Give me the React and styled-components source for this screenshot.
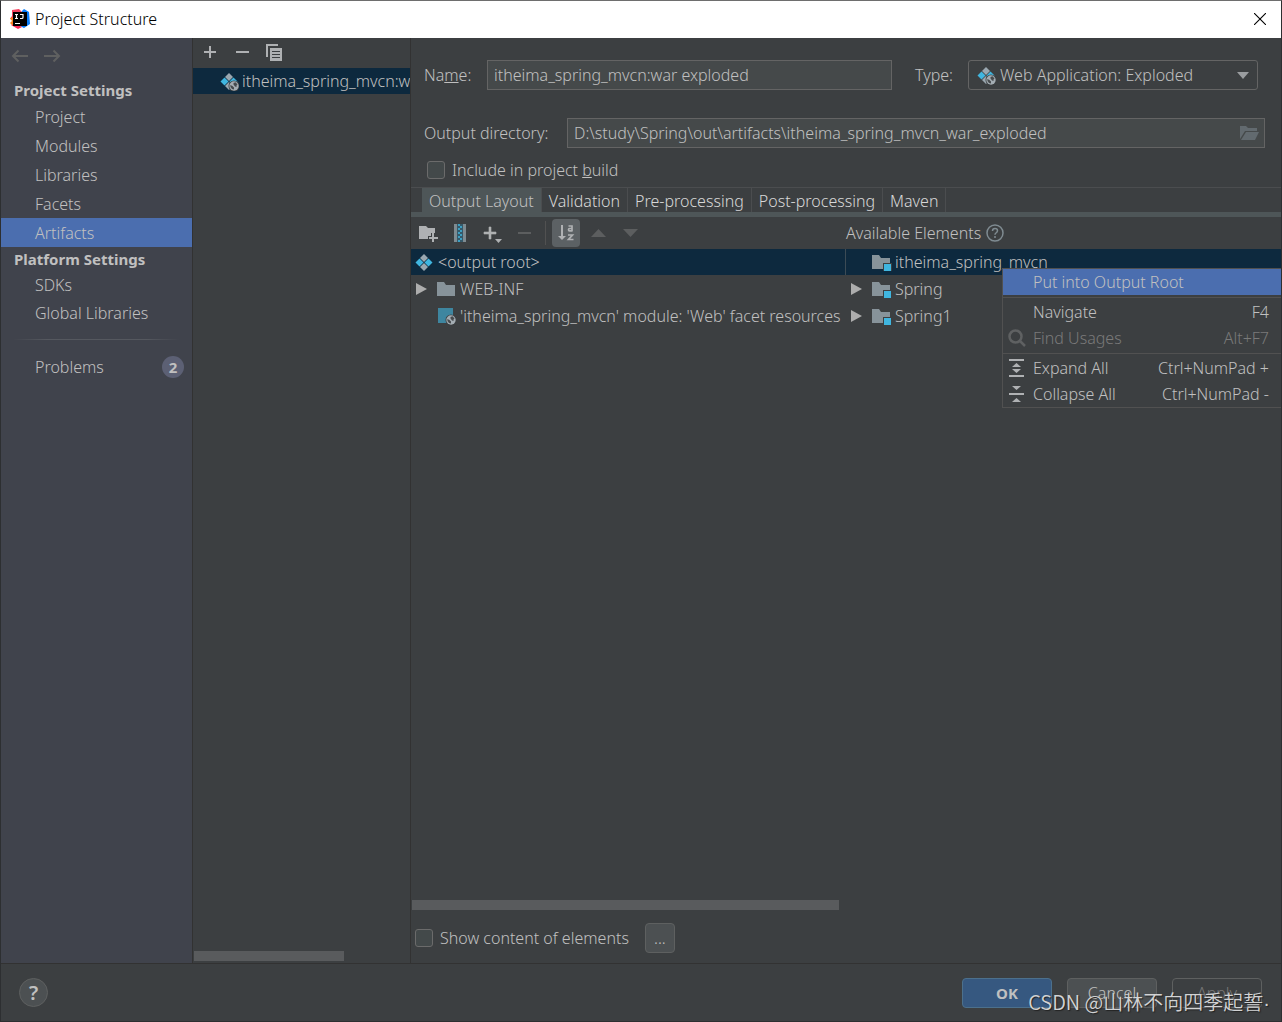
import styled, { createGlobalStyle } from "styled-components";

const COLORS = {
  background: "#3c3f41",
  sidebar: "#40434c",
  selection: "#4b6eaf",
  treeSelection: "#0d293e",
  text: "#c0c0c0",
  disabled: "#7a7a7a",
  line: "#323232",
  separator: "#515151",
  field: "#45494a",
  fieldBorder: "#646464",
  strip: "#4e5658",
  icon: "#afb1b3",
  blue: "#40b6e0",
  folder: "#87939a",
};

const GlobalStyle = createGlobalStyle`
  * {
    box-sizing: border-box;
  }

  body {
    margin: 0;
    background: ${COLORS.background};
    color: ${COLORS.text};
    font-family: "Noto Sans", "Noto Sans CJK SC", sans-serif;
    font-size: 16px;
    font-weight: 330;
    line-height: 20px;
  }

  button, input, select {
    margin: 0;
    font: inherit;
    color: inherit;
  }

  ul {
    margin: 0;
    padding: 0;
    list-style: none;
  }

  svg {
    display: block;
    flex: none;
  }
`;

const Window = styled.div`
  position: relative;
  display: flex;
  flex-direction: column;
  min-height: 100vh;
  border: 1px solid #2d2f31;
  border-top-color: #6e6e6e;
  overflow: hidden;
`;

const TitleBar = styled.header`
  display: flex;
  align-items: center;
  gap: 5px;
  height: 37px;
  padding: 0 15px 2px 9px;
  background: #ffffff;
  color: #000000;

  h1 {
    flex: 1;
    margin: 0;
    font-size: 16px;
    font-weight: 330;
  }
`;

const PlainButton = styled.button`
  display: flex;
  align-items: center;
  justify-content: center;
  padding: 0;
  border: 0;
  background: none;
`;

const Body = styled.div`
  flex: 1;
  display: grid;
  grid-template-columns: 192px 218px minmax(0, 1fr);
  border-bottom: 1px solid ${COLORS.line};
`;

const Sidebar = styled.nav`
  background: ${COLORS.sidebar};
  border-right: 1px solid ${COLORS.line};
`;

const History = styled.div`
  display: flex;
  gap: 16px;
  height: 40px;
  padding: 0 10px 4px;
  align-items: center;
`;

const SidebarTitle = styled.h2`
  margin: 0;
  padding-left: 13px;
  font-size: 15px;
  line-height: 24px;
`;

const SidebarLink = styled.a`
  display: flex;
  align-items: center;
  justify-content: space-between;
  height: ${(props) => (props.$short ? 28 : 29)}px;
  padding: 0 8px 0 34px;
  color: inherit;
  text-decoration: none;
  background: ${(props) => (props.$active ? COLORS.selection : "none")};
`;

const SidebarLine = styled.hr`
  height: 1px;
  margin: 12px 12px;
  border: 0;
  background: linear-gradient(to right, transparent, #55585f 20%, #55585f 80%, transparent);
`;

const Count = styled.span`
  width: 22px;
  border-radius: 11px;
  background: #5c6074;
  font-size: 15px;
  font-weight: 700;
  line-height: 22px;
  text-align: center;
`;

const Column = styled.section`
  display: flex;
  flex-direction: column;
  min-width: 0;
  padding-bottom: 2px;
  border-right: 1px solid ${COLORS.line};
`;

const ListToolbar = styled.div`
  display: flex;
  align-items: center;
  gap: 15px;
  height: 30px;
  padding: 0 8px 2px;
`;

const Artifact = styled.div`
  flex: 1;

  a {
    display: flex;
    align-items: center;
    gap: 3px;
    height: 26px;
    padding-left: 27px;
    overflow: hidden;
    background: ${COLORS.treeSelection};
    color: inherit;
    text-decoration: none;
    white-space: nowrap;
  }
`;

const Scrollbar = styled.div`
  width: ${(props) => props.$size};
  height: 10px;
  margin: 0 1px;
  background: #595b5d;
`;

const Main = styled.main`
  display: flex;
  flex-direction: column;
  min-width: 0;
`;

const Form = styled.form`
  padding: 22px 16px 0 13px;
`;

const FormRow = styled.div`
  display: flex;
  align-items: center;
  height: 30px;
  margin-bottom: ${(props) => props.$after}px;
  padding-right: ${(props) => props.$inset || 0}px;
`;

const Label = styled.label`
  width: ${(props) => props.$width}px;
  padding-left: ${(props) => props.$indent || 0}px;
  flex: none;
`;

const Field = styled.div`
  display: flex;
  align-items: center;
  flex: 1;
  min-width: 0;
  height: 30px;
  padding-right: 5px;
  border: 1px solid ${COLORS.fieldBorder};
  background: ${COLORS.field};

  input {
    flex: 1;
    min-width: 0;
    padding: 0 6px;
    border: 0;
    outline: 0;
    background: none;
  }
`;

const SelectBox = styled.div`
  display: flex;
  align-items: center;
  gap: 4px;
  width: 290px;
  height: 30px;
  padding: 0 8px;
  border: 1px solid ${COLORS.fieldBorder};
  border-radius: 3px;

  select {
    flex: 1;
    min-width: 0;
    appearance: none;
    padding: 0;
    border: 0;
    outline: 0;
    background: none;
  }
`;

const CheckLabel = styled.label`
  display: flex;
  align-items: center;
  gap: 7px;
  padding-left: ${(props) => props.$indent}px;

  input {
    appearance: none;
    width: 18px;
    height: 18px;
    border: 1px solid #6b6b6b;
    border-radius: 3px;
    background: #43494a;
  }
`;

const Tabs = styled.div`
  display: flex;
  height: 30px;
  padding-left: 11px;
  border-top: 1px solid #4b4d4f;
  border-bottom: 5px solid ${COLORS.strip};
`;

const Tab = styled.button`
  padding: 2px 7px 0;
  border: 0;
  border-right: 1px solid #4b4d4f;
  background: ${(props) => (props.$active ? COLORS.strip : "none")};
  color: ${(props) => (props.$active ? COLORS.text : "#d8d8d8")};
  white-space: nowrap;
`;

const Panes = styled.div`
  flex: 1;
  display: grid;
  grid-template-columns: 1fr 1fr;
`;

const Pane = styled.div`
  position: relative;
  display: flex;
  flex-direction: column;
  min-width: 0;
`;

const PaneToolbar = styled.div`
  display: flex;
  align-items: center;
  gap: ${(props) => props.$gap}px;
  height: 32px;
  padding-left: ${(props) => props.$indent}px;
`;

const ToolButton = styled(PlainButton)`
  width: 28px;
  height: 28px;
  border-radius: 4px;
  background: ${(props) => (props.$pressed ? "#5c6164" : "none")};
`;

const Divider = styled.span`
  width: 1px;
  height: 24px;
  margin: 0 2px 0 3px;
  background: ${COLORS.separator};
`;

const Tree = styled.ul`
  flex: 1;
`;

const TreeRow = styled.li`
  display: flex;
  align-items: center;
  gap: ${(props) => props.$gap}px;
  height: ${(props) => (props.$selected ? 26 : 27)}px;
  padding-left: ${(props) => props.$indent}px;
  border-right: ${(props) => (props.$split ? "1px solid #3c4b55" : "0")};
  overflow: hidden;
  background: ${(props) => (props.$selected ? COLORS.treeSelection : "none")};
  white-space: nowrap;
`;

const Twisty = styled.span`
  width: ${(props) => props.$width}px;
`;

const Menu = styled.div`
  position: absolute;
  top: 51px;
  left: 156px;
  width: 280px;
  border: 1px solid ${COLORS.separator};
  background: ${COLORS.background};
`;

const MenuItem = styled.button`
  display: grid;
  grid-template-columns: 18px 1fr auto;
  align-items: center;
  gap: 7px;
  width: 100%;
  height: 26px;
  padding: 0 12px 0 5px;
  border: 0;
  background: ${(props) => (props.$active ? COLORS.selection : "none")};
  text-align: left;

  &:disabled {
    color: ${COLORS.disabled};
  }
`;

const MenuLine = styled.hr`
  height: 1px;
  margin: 2px 0 1px;
  border: 0;
  background: ${COLORS.separator};
`;

const ContentOptions = styled.div`
  display: flex;
  align-items: center;
  gap: 16px;
  height: 53px;
  padding: 2px 4px 0;
`;

const MoreButton = styled.button`
  width: 30px;
  height: 30px;
  padding: 0;
  border: 1px solid #5e6060;
  border-radius: 4px;
  background: #4c5052;
`;

const Footer = styled.footer`
  display: flex;
  align-items: center;
  gap: 15px;
  height: 57px;
  padding: 0 19px 0 18px;
`;

const HelpButton = styled.button`
  width: 29px;
  height: 29px;
  margin-right: auto;
  padding: 0;
  border: 1px solid #5e6060;
  border-radius: 50%;
  background: #4c5052;
  font-size: 20px;
  font-weight: 600;
`;

const DialogButton = styled.button`
  width: 90px;
  height: 30px;
  border: 1px solid ${(props) => (props.$primary ? "#4c708c" : "#5e6060")};
  border-radius: 4px;
  background: ${(props) => (props.$primary ? "#365880" : "#4c5052")};
  font-size: ${(props) => (props.$primary ? 15 : 16)}px;
  font-weight: ${(props) => (props.$primary ? 700 : 330)};

  &:disabled {
    background: none;
    color: ${COLORS.disabled};
  }
`;

const Watermark = styled.span`
  position: absolute;
  right: 11px;
  bottom: 5px;
  color: #d2d3d4;
  font-family: "Noto Sans CJK SC", sans-serif;
  font-size: 20px;
  line-height: 26px;
  text-shadow: 1px 1px 1px #222222;
  pointer-events: none;

  span {
    font-family: "Liberation Sans", sans-serif;
  }
`;

const IdeaLogo = () => (
  <svg width="20" height="20" viewBox="0 0 20 20">
    <path d="M2 1l7-1 4 4-6 8-7-2 2-3z" fill="#f5415f" />
    <path d="M0 9l5-1 3 6-5 3-3-3 2-2z" fill="#fc801d" />
    <path d="M12 2l2-2 5 3 1 12-6 4-6-3z" fill="#087cfa" />
    <path d="M1 16l5-1 6 3-4 2z" fill="#fe2857" />
    <rect x="3" y="3" width="14" height="14" fill="#000000" />
    <path d="M5 5.500h3M6.500 5.500v4M5 9.500h3M10 5.500h3v3q0 1-1 1h-2M5 14.500h5" fill="none" stroke="#ffffff" strokeWidth="1.200" />
  </svg>
);

const CloseIcon = () => (
  <svg width="12" height="12" viewBox="0 0 12 12" stroke="#000000" strokeWidth="1.100">
    <path d="M0 0l12 12M12 0l-12 12" />
  </svg>
);

const ArrowIcon = ({ right }) => (
  <svg width="17" height="14" viewBox="0 0 17 14" fill="none" stroke="#5f6060" strokeWidth="2">
    <path d={right ? "M0 7h15M9.500 1.500l5.500 5.500l-5.500 5.500" : "M17 7h-15M7.500 1.500l-5.500 5.500l5.500 5.500"} />
  </svg>
);

const AddIcon = () => (
  <svg width="18" height="18" viewBox="0 0 18 18" fill={COLORS.icon}>
    <path d="M8 3h2v5h5v2h-5v5h-2v-5h-5v-2h5z" />
  </svg>
);

const AddMenuIcon = () => (
  <svg width="20" height="20" viewBox="0 0 20 20" fill={COLORS.icon}>
    <path d="M8 4h2v5h5v2h-5v5h-2v-5h-5v-2h5z" transform="translate(-1 0)" stroke={COLORS.icon} strokeWidth=".6" />
    <path d="M13 16h7l-3.500 4z" />
  </svg>
);

const RemoveIcon = ({ disabled }) => (
  <svg width="16" height="18" viewBox="0 0 16 18">
    <rect x="2" y="8" width="13" height="2" fill={disabled ? "#5c5e5f" : COLORS.icon} />
  </svg>
);

const CopyIcon = () => (
  <svg width="18" height="18" viewBox="0 0 18 18" fill={COLORS.icon}>
    <path d="M1 1h12v2h-10v11h-2z" />
    <path fillRule="evenodd" d="M5 5h12v13h-12zM7 8v1h8v-1zM7 11v1h8v-1zM7 14v1h8v-1z" />
  </svg>
);

const Globe = () => (
  <>
    <circle cx="14" cy="14" r="5.500" fill={COLORS.background} />
    <circle cx="14" cy="14" r="4.700" fill="#a4adb3" />
    <path d="M10.300 13l2.200 1 1.500 1.500v2l-2-.5-1.500-2zM13.500 11l2-.7 2 2.200-1 1v1.500l-1.500-.5-1.500-2z" fill="#474b4e" />
  </>
);

const ArtifactIcon = ({ web }) => (
  <svg width="19" height="19" viewBox="0 0 19 19">
    <path d="M9 1l4 4-4 4-4-4z" fill="#9aa7b0" />
    <path d="M4.500 5.500l4 4-4 4-4-4z" fill={COLORS.blue} />
    <path d="M13.500 5.500l4 4-4 4-4-4z" fill={COLORS.blue} />
    <path d="M9 10l4 4-4 4-4-4z" fill="#9aa7b0" />
    {web && <Globe />}
  </svg>
);

const FolderIcon = ({ module }) => (
  <svg width={module ? 20 : 18} height="18" viewBox={module ? "0 0 20 18" : "0 0 18 18"}>
    <path d="M0 2h7l2 3h9v11h-18z" fill={COLORS.folder} />
    {module && (
      <>
        <path d="M11 10h9v8h-9z" fill={COLORS.background} />
        <path d="M12 11h7v7h-7z" fill={COLORS.blue} />
      </>
    )}
  </svg>
);

const OpenFolderIcon = () => (
  <svg width="19" height="16" viewBox="0 0 19 16" fill="#626a6f">
    <path d="M0 1h6l2 2h9v3h-12l-5 8z" />
    <path d="M6 7h13l-4 8h-14z" />
  </svg>
);

const NewFolderIcon = () => (
  <svg width="19" height="18" viewBox="0 0 19 18" fill={COLORS.icon}>
    <path d="M0 2h7l2 2h7v5h-4v3h-3v3h-9z" />
    <path d="M13 9h2v4h4v2h-4v3h-2v-3h-3v-2h3z" />
  </svg>
);

const ArchiveIcon = () => (
  <svg width="14" height="18" viewBox="0 0 14 18">
    <path d="M1 0h3v18h-3zM10 0h3v18h-3z" fill="#7f8b91" />
    <path d="M4 0h6v18h-6z" fill="#35596a" />
    <path d="M5 1h2M7 3h2M5 5h2M7 7h2M5 9h2M7 11h2M5 13h2M7 15h2M5 17h2" stroke={COLORS.blue} strokeWidth="1.500" />
  </svg>
);

const SortIcon = () => (
  <svg width="18" height="18" viewBox="0 0 18 18" fill={COLORS.icon}>
    <path d="M4 1h2v11h3l-4 4-4-4h3z" />
    <g fill="none" stroke={COLORS.icon} strokeWidth="1.700">
      <path d="M11.500 2h3.500v5.500M15 4.500h-2.500q-1 0-1 1.200t1 1.200h2.500M11 11h4.500l-4 4.500h5" />
    </g>
  </svg>
);

const TriangleIcon = ({ up }) => (
  <svg width="15" height="8" viewBox="0 0 15 8" fill="#5c5e5f">
    <path d={up ? "M0 8h15l-7.500-8z" : "M0 0h15l-7.500 8z"} />
  </svg>
);

const CaretIcon = () => (
  <svg width="12" height="7" viewBox="0 0 12 7" fill="#9a9da0">
    <path d="M0 0h12l-6 7z" />
  </svg>
);

const ExpandIcon = () => (
  <svg width="13" height="12" viewBox="0 0 13 12" fill="#adadad">
    <path d="M1 0v12l11-6z" />
  </svg>
);

const FacetIcon = () => (
  <svg width="19" height="19" viewBox="0 0 19 19">
    <path d="M1 2h15v15h-15z" fill="#3e86a0" />
    <Globe />
  </svg>
);

const HelpIcon = () => (
  <svg width="18" height="18" viewBox="0 0 18 18" fill="none" stroke="#7f8b91" strokeWidth="1.500">
    <circle cx="9" cy="9" r="8" />
    <path d="M6.500 7q0-2.500 2.500-2.500t2.500 2.200q0 1.300-1.500 2.300-1 .7-1 1.800M9 12v2" />
  </svg>
);

const SearchIcon = () => (
  <svg width="18" height="18" viewBox="0 0 18 18" fill="none" stroke="#5f6162" strokeWidth="2.500">
    <circle cx="7.500" cy="7.500" r="6" />
    <path d="M12 12l5 5" />
  </svg>
);

const ExpandAllIcon = () => (
  <svg width="18" height="18" viewBox="0 0 18 18" fill={COLORS.icon}>
    <path d="M1 0h15v2h-15zM1 16h15v2h-15zM8.500 4l4.500 4h-9zM8.500 14l4.500-4h-9z" />
  </svg>
);

const CollapseAllIcon = () => (
  <svg width="18" height="18" viewBox="0 0 18 18" fill={COLORS.icon}>
    <path d="M1 8h15v2h-15zM4 1h9l-4.500 4zM4 17h9l-4.500-4z" />
  </svg>
);

const projectLinks = ["Project", "Modules", "Libraries", "Facets", "Artifacts"];
const platformLinks = ["SDKs", "Global Libraries"];
const tabs = ["Output Layout", "Validation", "Pre-processing", "Post-processing", "Maven"];

const ProjectSidebar = () => (
  <Sidebar>
    <History>
      <PlainButton aria-label="Back"><ArrowIcon /></PlainButton>
      <PlainButton aria-label="Forward"><ArrowIcon right /></PlainButton>
    </History>
    <SidebarTitle>Project Settings</SidebarTitle>
    {projectLinks.map((name) => (
      <SidebarLink key={name} href="#" $active={name === "Artifacts"}>{name}</SidebarLink>
    ))}
    <SidebarTitle>Platform Settings</SidebarTitle>
    {platformLinks.map((name) => (
      <SidebarLink key={name} href="#" $short>{name}</SidebarLink>
    ))}
    <SidebarLine />
    <SidebarLink href="#">
      Problems
      <Count>2</Count>
    </SidebarLink>
  </Sidebar>
);

const ArtifactList = () => (
  <Column>
    <ListToolbar>
      <PlainButton aria-label="Add"><AddIcon /></PlainButton>
      <PlainButton aria-label="Remove"><RemoveIcon /></PlainButton>
      <PlainButton aria-label="Copy"><CopyIcon /></PlainButton>
    </ListToolbar>
    <Artifact>
      <a href="#">
        <ArtifactIcon web />
        itheima_spring_mvcn:war exploded
      </a>
    </Artifact>
    <Scrollbar $size="69%" />
  </Column>
);

const ArtifactForm = () => (
  <Form>
    <FormRow $after={28} $inset={7}>
      <Label htmlFor="name" $width={63}>Na<u>m</u>e:</Label>
      <Field>
        <input id="name" defaultValue="itheima_spring_mvcn:war exploded" />
      </Field>
      <Label htmlFor="type" $width={76} $indent={23}>Type:</Label>
      <SelectBox>
        <ArtifactIcon web />
        <select id="type">
          <option>Web Application: Exploded</option>
        </select>
        <CaretIcon />
      </SelectBox>
    </FormRow>
    <FormRow $after={7}>
      <Label htmlFor="directory" $width={143}>Output directory:</Label>
      <Field>
        <input id="directory" defaultValue="D:\study\Spring\out\artifacts\itheima_spring_mvcn_war_exploded" />
        <PlainButton type="button" aria-label="Browse"><OpenFolderIcon /></PlainButton>
      </Field>
    </FormRow>
    <FormRow $after={2}>
      <CheckLabel $indent={3}>
        <input type="checkbox" />
        <span>Include in project <u>b</u>uild</span>
      </CheckLabel>
    </FormRow>
  </Form>
);

const ContextMenu = () => (
  <Menu role="menu">
    <MenuItem role="menuitem" $active>
      <span />
      <span>Put into Output Root</span>
    </MenuItem>
    <MenuLine />
    <MenuItem role="menuitem">
      <span />
      <span>Navigate</span>
      <span>F4</span>
    </MenuItem>
    <MenuItem role="menuitem" disabled>
      <SearchIcon />
      <span>Find Usages</span>
      <span>Alt+F7</span>
    </MenuItem>
    <MenuLine />
    <MenuItem role="menuitem">
      <ExpandAllIcon />
      <span>Expand All</span>
      <span>Ctrl+NumPad +</span>
    </MenuItem>
    <MenuItem role="menuitem">
      <CollapseAllIcon />
      <span>Collapse All</span>
      <span>Ctrl+NumPad -</span>
    </MenuItem>
  </Menu>
);

const LayoutPanes = () => (
  <Panes>
    <Pane>
      <PaneToolbar $gap={4} $indent={3}>
        <ToolButton aria-label="New folder"><NewFolderIcon /></ToolButton>
        <ToolButton aria-label="New archive"><ArchiveIcon /></ToolButton>
        <ToolButton aria-label="Add copy of"><AddMenuIcon /></ToolButton>
        <ToolButton aria-label="Remove"><RemoveIcon disabled /></ToolButton>
        <Divider />
        <ToolButton aria-label="Sort" $pressed><SortIcon /></ToolButton>
        <ToolButton aria-label="Move up"><TriangleIcon up /></ToolButton>
        <ToolButton aria-label="Move down"><TriangleIcon /></ToolButton>
      </PaneToolbar>
      <Tree>
        <TreeRow $selected $split $indent={4} $gap={4}>
          <ArtifactIcon />
          &lt;output root&gt;
        </TreeRow>
        <TreeRow $indent={4} $gap={5}>
          <Twisty $width={17}><ExpandIcon /></Twisty>
          <FolderIcon />
          WEB-INF
        </TreeRow>
        <TreeRow $indent={26} $gap={4}>
          <FacetIcon />
          'itheima_spring_mvcn' module: 'Web' facet resources
        </TreeRow>
      </Tree>
      <Scrollbar $size="427px" />
    </Pane>
    <Pane>
      <PaneToolbar $gap={5} $indent={0}>
        Available Elements
        <HelpIcon />
      </PaneToolbar>
      <Tree>
        <TreeRow $selected $indent={26} $gap={3}>
          <FolderIcon module />
          itheima_spring_mvcn
        </TreeRow>
        {["Spring", "Spring1"].map((name) => (
          <TreeRow key={name} $indent={4} $gap={3}>
            <Twisty $width={19}><ExpandIcon /></Twisty>
            <FolderIcon module />
            {name}
          </TreeRow>
        ))}
      </Tree>
      <ContextMenu />
    </Pane>
  </Panes>
);

const App = () => {
  return (
    <Window>
      <GlobalStyle />
      <TitleBar>
        <IdeaLogo />
        <h1>Project Structure</h1>
        <PlainButton aria-label="Close"><CloseIcon /></PlainButton>
      </TitleBar>
      <Body>
        <ProjectSidebar />
        <ArtifactList />
        <Main>
          <ArtifactForm />
          <Tabs role="tablist">
            {tabs.map((name, index) => (
              <Tab key={name} role="tab" $active={index === 0}>{name}</Tab>
            ))}
          </Tabs>
          <LayoutPanes />
          <ContentOptions>
            <CheckLabel $indent={0}>
              <input type="checkbox" />
              Show content of elements
            </CheckLabel>
            <MoreButton>...</MoreButton>
          </ContentOptions>
        </Main>
      </Body>
      <Footer>
        <HelpButton aria-label="Help">?</HelpButton>
        <DialogButton $primary>OK</DialogButton>
        <DialogButton>Cancel</DialogButton>
        <DialogButton disabled>Apply</DialogButton>
      </Footer>
      <Watermark>CSDN @山林不向四季起誓<span>·</span></Watermark>
    </Window>
  );
};

export default App;
